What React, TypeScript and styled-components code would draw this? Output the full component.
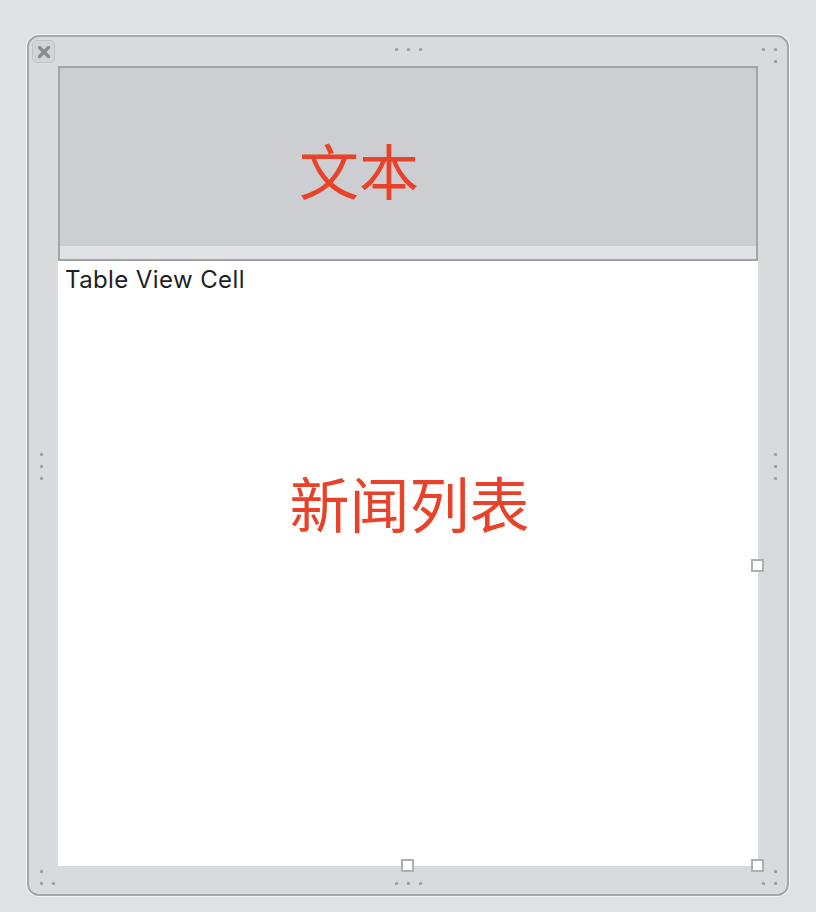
import React from "react";
import styled, { createGlobalStyle } from "styled-components";

const GlobalStyle = createGlobalStyle`
  html, body {
    margin: 0;
    padding: 0;
    background: #e0e1e5;
  }
  body {
    font-family: "Inter", "Liberation Sans", "Noto Sans CJK SC", sans-serif;
  }
`;

const Page = styled.div`
  width: 816px;
  height: 912px;
  padding: 35px 0 0 27px;
  box-sizing: border-box;
`;

const Frame = styled.div`
  position: relative;
  width: 762px;
  height: 861px;
  box-sizing: border-box;
  border: 2px solid #a5a6a9;
  border-radius: 12px;
  background: #d9dadd;
  box-shadow: 0 0 0 1px #f4f4f6;
  padding: 29px 29px 28px 29px;
`;

const Content = styled.div`
  width: 700px;
  height: 800px;
  display: flex;
  flex-direction: column;
  background: #ffffff;
`;

const Header = styled.div`
  height: 195px;
  box-sizing: border-box;
  border: 2px solid #a3a4a7;
  display: flex;
  flex-direction: column;
`;

const HeaderFill = styled.div`
  flex: 1;
  background: #cdced2;
  padding: 71px 0 0 239px;
  box-sizing: border-box;
`;

const HeaderStrip = styled.div`
  height: 13px;
  background: #e1e2e5;
`;

const BigText = styled.div`
  font-family: "Noto Sans CJK SC", sans-serif;
  font-size: 60px;
  line-height: 60px;
  color: #e8432a;
  white-space: nowrap;
`;

const CellArea = styled.div`
  flex: 1;
  display: flex;
  flex-direction: column;
`;

const CellLabel = styled.div`
  margin: 5px 0 0 7px;
  font-family: "Inter", "Liberation Sans", sans-serif;
  font-size: 24px;
  letter-spacing: 0.4px;
  line-height: 28px;
  color: #1f1f1f;
`;

const CenterText = styled(BigText)`
  margin-top: 178px;
  padding-left: 3px;
  text-align: center;
`;

const CloseButton = styled.div`
  position: absolute;
  left: 3px;
  top: 3px;
  width: 23px;
  height: 23px;
  box-sizing: border-box;
  border-radius: 5px;
  background: #d3d4d7;
  border: 1px solid #c1c2c5;
  display: flex;
  align-items: center;
  justify-content: center;
`;

const Dot = styled.span<{ $x: number; $y: number }>`
  position: absolute;
  left: ${(p) => p.$x - 29 - 1.5}px;
  top: ${(p) => p.$y - 37 - 1.5}px;
  width: 3px;
  height: 3px;
  border-radius: 50%;
  background: #9d9ea1;
  box-shadow: 0 0 1px #a8a9ac;
`;

const Handle = styled.span<{ $x: number; $y: number }>`
  position: absolute;
  left: ${(p) => p.$x - 29 - 6.5}px;
  top: ${(p) => p.$y - 37 - 6.5}px;
  width: 13px;
  height: 13px;
  box-sizing: border-box;
  background: #ffffff;
  border: 2px solid #aeafb2;
`;

const dots: [number, number][] = [
  [396, 49], [408, 49], [420, 49],
  [763, 49], [775, 49], [775, 61],
  [41, 454], [41, 466], [41, 478],
  [775, 454], [775, 466], [775, 478],
  [41, 871], [41, 883], [53, 883],
  [396, 883], [408, 883], [420, 883],
  [775, 871], [763, 883], [775, 883],
];

const handles: [number, number][] = [
  [407, 865],
  [757, 865],
  [757, 565],
];

export default function App() {
  return (
    <>
      <GlobalStyle />
      <Page>
        <Frame>
          <Content>
            <Header>
              <HeaderFill>
                <BigText>文本</BigText>
              </HeaderFill>
              <HeaderStrip />
            </Header>
            <CellArea>
              <CellLabel>Table View Cell</CellLabel>
              <CenterText>新闻列表</CenterText>
            </CellArea>
          </Content>
          <CloseButton>
            <svg width="14" height="14" viewBox="0 0 14 14">
              <path
                d="M2.5 2.5 L11.5 11.5 M11.5 2.5 L2.5 11.5"
                stroke="#8a8b8e"
                strokeWidth="3.4"
                strokeLinecap="round"
                fill="none"
              />
            </svg>
          </CloseButton>
          {dots.map(([x, y], i) => (
            <Dot key={i} $x={x} $y={y} />
          ))}
          {handles.map(([x, y], i) => (
            <Handle key={i} $x={x} $y={y} />
          ))}
        </Frame>
      </Page>
    </>
  );
}
